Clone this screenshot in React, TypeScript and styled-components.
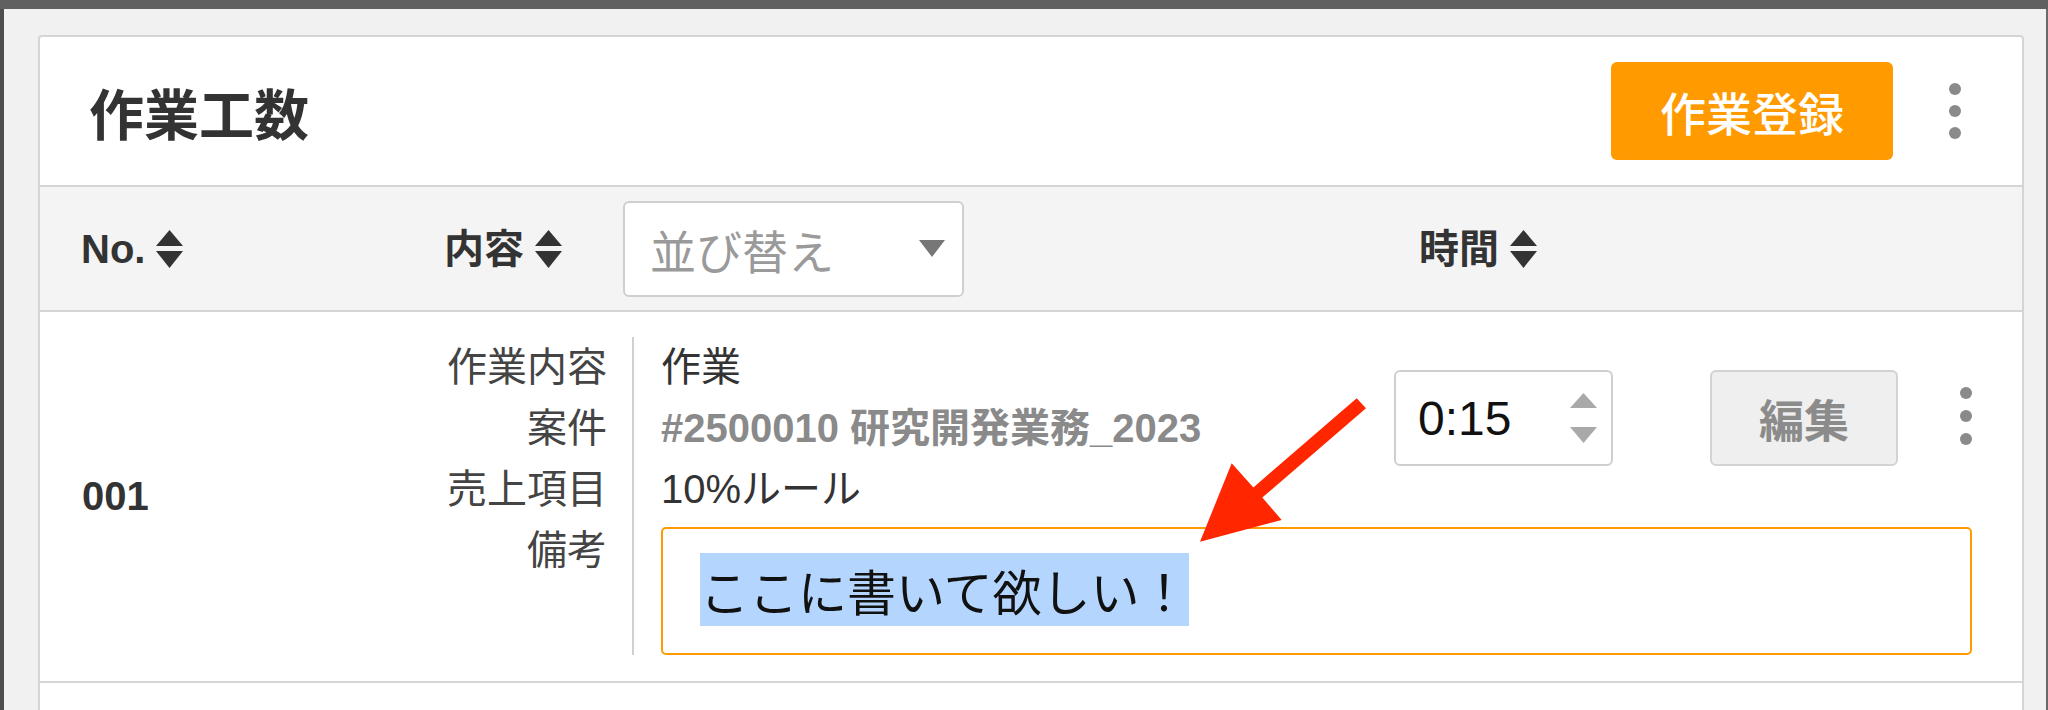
import React from 'react';
import styled, { createGlobalStyle } from 'styled-components';

const GlobalStyle = createGlobalStyle`
	*, *::before, *::after {
		box-sizing: border-box;
	}
	html, body {
		margin: 0;
		padding: 0;
	}
	body {
		width: 2048px;
		height: 710px;
		overflow: hidden;
		background: #f1f1f1;
		color: #333;
		font-family: 'Liberation Sans', 'Noto Sans CJK JP', sans-serif;
	}
`;

const SortIcon = () => (
	<svg width="27" height="38" viewBox="0 0 27 38" fill="currentColor">
		<path d="M0 16 L13.5 0 L27 16 Z" />
		<path d="M0 21 L27 21 L13.5 38 Z" />
	</svg>
);

const Arrow = () => (
	<StyledArrow width="175" height="154" viewBox="0 0 175 154">
		<polygon
			points="161.7,5.3 171,15.3 67.3,104.5 86.7,127 5,148.7 36.7,70.3 58.4,94.4"
			fill="#ff2600"
		/>
	</StyledArrow>
);

const Kebab = ({ gap }: { gap: number }) => (
	<StyledKebab $gap={gap}>
		<Dot />
		<Dot />
		<Dot />
	</StyledKebab>
);

const App = (): JSX.Element => {
	return (
		<>
			<GlobalStyle />
			<StyledWindow>
				<StyledTopBar />
				<StyledBody>
					<StyledLeftEdge />
					<StyledStage>
						<StyledCard>
							<StyledCardHeader>
								<StyledTitle>作業工数</StyledTitle>
								<StyledHeaderActions>
									<StyledPrimaryButton>作業登録</StyledPrimaryButton>
									<StyledHeaderKebab>
										<Kebab gap={10} />
									</StyledHeaderKebab>
								</StyledHeaderActions>
							</StyledCardHeader>

							<StyledTableHead>
								<StyledNoHead>
									<StyledSortLabel>
										No.
										<SortIcon />
									</StyledSortLabel>
								</StyledNoHead>
								<StyledContentHead>
									<StyledSortLabel>
										内容
										<SortIcon />
									</StyledSortLabel>
									<StyledSelect>
										<span>並び替え</span>
										<svg width="26" height="17" viewBox="0 0 26 17">
											<path d="M0 0 L26 0 L13 17 Z" fill="#777" />
										</svg>
									</StyledSelect>
								</StyledContentHead>
								<StyledSortLabel>
									時間
									<SortIcon />
								</StyledSortLabel>
							</StyledTableHead>

							<StyledRow>
								<StyledNoCell>001</StyledNoCell>
								<StyledLabels>
									<div>作業内容</div>
									<div>案件</div>
									<div>売上項目</div>
									<div>備考</div>
								</StyledLabels>
								<StyledDetail>
									<StyledValues>
										<StyledValue>作業</StyledValue>
										<StyledValue $muted>#2500010 研究開発業務_2023</StyledValue>
										<StyledValue>10%ルール</StyledValue>
									</StyledValues>
									<StyledTimeInput>
										<span>0:15</span>
										<svg width="27" height="50" viewBox="0 0 27 50" fill="#a9a9a9">
											<path d="M0 15 L13.5 0 L27 15 Z" />
											<path d="M0 34 L27 34 L13.5 50 Z" />
										</svg>
									</StyledTimeInput>
									<StyledEditButton>編集</StyledEditButton>
									<StyledRowKebab>
										<Kebab gap={11} />
									</StyledRowKebab>
									<StyledNote>
										<StyledSelection>ここに書いて欲しい！</StyledSelection>
									</StyledNote>
								</StyledDetail>
								<Arrow />
							</StyledRow>

							<StyledRowStub />
						</StyledCard>
					</StyledStage>
					<StyledRightEdge />
				</StyledBody>
			</StyledWindow>
		</>
	);
};

export default App;

const StyledWindow = styled.div`
	display: flex;
	flex-direction: column;
	width: 2048px;
	height: 710px;
	overflow: hidden;
`;

const StyledTopBar = styled.div`
	flex-shrink: 0;
	height: 9px;
	background: #606060;
`;

const StyledBody = styled.div`
	display: flex;
	flex: 1;
	min-height: 0;
`;

const StyledLeftEdge = styled.div`
	flex-shrink: 0;
	width: 4px;
	background: #4e4e4e;
`;

const StyledRightEdge = styled.div`
	flex-shrink: 0;
	width: 2px;
	background: #6a6a6a;
`;

const StyledStage = styled.div`
	flex: 1;
	min-width: 0;
	padding: 26px 22px 0 34px;
	background: #f1f1f1;
	overflow: hidden;
`;

const StyledCard = styled.div`
	background: #fff;
	border: 2px solid #d5d5d5;
	border-radius: 4px;
`;

const StyledCardHeader = styled.div`
	display: flex;
	align-items: center;
	justify-content: space-between;
	height: 150px;
	padding: 0 47px 0 49px;
	border-bottom: 2px solid #d5d5d5;
`;

const StyledTitle = styled.h1`
	margin: 0;
	font-family: 'Noto Sans CJK JP', sans-serif;
	font-size: 55px;
	font-weight: 700;
	color: #333;
`;

const StyledHeaderActions = styled.div`
	display: flex;
	align-items: center;
	gap: 42px;
`;

const StyledPrimaryButton = styled.button`
	width: 282px;
	height: 98px;
	border: none;
	border-radius: 6px;
	background: #ff9a00;
	color: #fff;
	font-family: 'Noto Sans CJK JP', sans-serif;
	font-size: 46px;
	font-weight: 500;
	cursor: pointer;
`;

const StyledHeaderKebab = styled.div`
	display: flex;
	justify-content: center;
	width: 40px;
`;

const StyledKebab = styled.div<{ $gap: number }>`
	display: flex;
	flex-direction: column;
	gap: ${(p) => p.$gap}px;
`;

const Dot = styled.span`
	width: 12px;
	height: 12px;
	border-radius: 50%;
	background: #8a8a8a;
`;

const StyledTableHead = styled.div`
	display: flex;
	align-items: center;
	height: 125px;
	padding-left: 41px;
	background: #f4f4f4;
	border-bottom: 2px solid #d5d5d5;
`;

const StyledSortLabel = styled.div`
	display: inline-flex;
	align-items: center;
	gap: 11px;
	font-size: 40px;
	font-weight: 700;
	color: #333;
	line-height: 1;
`;

const StyledNoHead = styled.div`
	flex: 0 0 363px;
`;

const StyledContentHead = styled.div`
	display: flex;
	align-items: center;
	gap: 61px;
	flex: 0 0 975px;
`;

const StyledSelect = styled.div`
	display: flex;
	align-items: center;
	justify-content: space-between;
	width: 341px;
	height: 96px;
	padding: 0 17px 0 25px;
	background: #fff;
	border: 2px solid #cfcfcf;
	border-radius: 6px;
	font-family: 'Noto Sans CJK JP', sans-serif;
	font-size: 46px;
	color: #9a9a9a;
`;

const StyledRow = styled.div`
	position: relative;
	display: flex;
	padding: 25px 50px 26px 0;
	border-bottom: 2px solid #d5d5d5;
`;

const StyledNoCell = styled.div`
	flex: 0 0 380px;
	align-self: center;
	padding-left: 42px;
	font-size: 40px;
	font-weight: 700;
	color: #333;
`;

const StyledLabels = styled.div`
	flex: 0 0 214px;
	padding-right: 25px;
	border-right: 2px solid #d0d0d0;
	text-align: right;
	font-size: 40px;
	line-height: 61px;
	color: #444;
`;

const StyledDetail = styled.div`
	flex: 1;
	display: grid;
	grid-template-columns: 1fr 219px 97px 188px 74px;
	grid-template-rows: auto auto;
	padding-left: 27px;
`;

const StyledValues = styled.div`
	grid-column: 1;
	font-size: 40px;
	line-height: 61px;
`;

const StyledValue = styled.div<{ $muted?: boolean }>`
	color: ${(p) => (p.$muted ? '#8a8a8a' : '#333')};
	font-weight: ${(p) => (p.$muted ? 700 : 400)};
	white-space: nowrap;
`;

const StyledTimeInput = styled.div`
	grid-column: 2;
	align-self: start;
	display: flex;
	align-items: center;
	justify-content: space-between;
	height: 96px;
	margin-top: 33px;
	padding: 0 14px 0 22px;
	border: 2px solid #cfcfcf;
	border-radius: 6px;
	font-size: 48px;
	color: #111;
`;

const StyledEditButton = styled.button`
	grid-column: 4;
	align-self: start;
	height: 96px;
	margin-top: 33px;
	background: #efefef;
	border: 2px solid #d3d3d3;
	border-radius: 6px;
	font-family: 'Noto Sans CJK JP', sans-serif;
	font-size: 45px;
	font-weight: 700;
	color: #8b8b8b;
`;

const StyledRowKebab = styled.div`
	grid-column: 5;
	justify-self: end;
	align-self: start;
	margin-top: 50px;
`;

const StyledNote = styled.div`
	grid-column: 1 / -1;
	height: 128px;
	margin-top: 7px;
	padding: 24px 37px 0;
	border: 2px solid #ff9a00;
	border-radius: 5px;
`;

const StyledSelection = styled.span`
	display: inline-block;
	height: 73px;
	line-height: 73px;
	background: #b4d6fe;
	font-family: 'Noto Sans CJK JP', sans-serif;
	font-size: 49px;
	color: #111;
`;

const StyledArrow = styled.svg`
	position: absolute;
	left: 1155px;
	top: 81px;
	pointer-events: none;
`;

const StyledRowStub = styled.div`
	height: 80px;
	background: #fff;
`;
